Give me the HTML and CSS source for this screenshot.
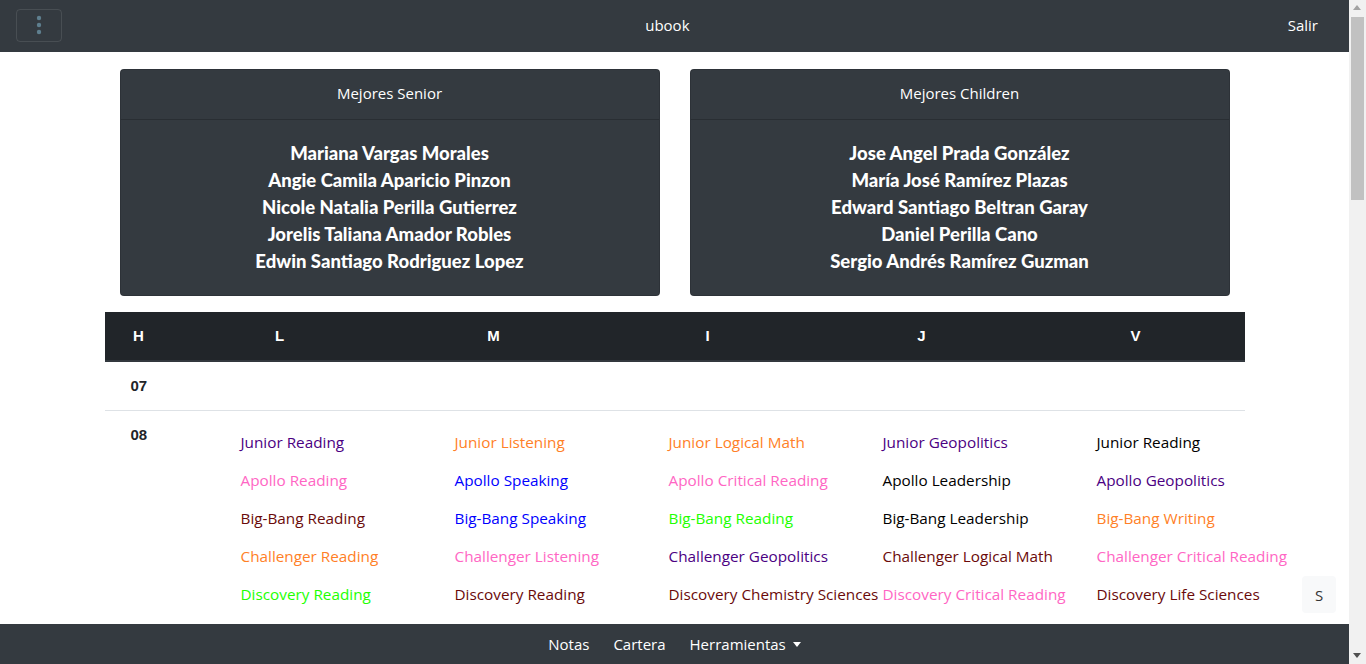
FILE: index.html
```html
<!DOCTYPE html>
<html lang="es">
<head>
<meta charset="utf-8">
<title>ubook</title>
<link rel="stylesheet" href="styles.css">
</head>
<body>
<nav class="topbar">
  <button class="menu-btn" type="button" aria-label="Menú">
    <svg width="6" height="20" viewBox="0 0 6 20"><circle cx="3" cy="3" r="2.2"/><circle cx="3" cy="10" r="2.2"/><circle cx="3" cy="17" r="2.2"/></svg>
  </button>
  <span class="brand">ubook</span>
  <a class="logout" href="#">Salir</a>
</nav>

<main class="page">
  <section class="cards">
    <div class="card">
      <div class="card-head">Mejores Senior</div>
      <div class="card-body">
        <div>Mariana Vargas Morales</div>
        <div>Angie Camila Aparicio Pinzon</div>
        <div>Nicole Natalia Perilla Gutierrez</div>
        <div>Jorelis Taliana Amador Robles</div>
        <div>Edwin Santiago Rodriguez Lopez</div>
      </div>
    </div>
    <div class="card">
      <div class="card-head">Mejores Children</div>
      <div class="card-body">
        <div>Jose Angel Prada González</div>
        <div>María José Ramírez Plazas</div>
        <div>Edward Santiago Beltran Garay</div>
        <div>Daniel Perilla Cano</div>
        <div>Sergio Andrés Ramírez Guzman</div>
      </div>
    </div>
  </section>

  <section class="schedule">
    <div class="sched-head">
      <div class="hcell first"><span>H</span></div>
      <div class="hcell"><span>L</span></div>
      <div class="hcell"><span>M</span></div>
      <div class="hcell"><span>I</span></div>
      <div class="hcell"><span>J</span></div>
      <div class="hcell"><span>V</span></div>
    </div>
    <div class="sched-row">
      <div class="hour">07</div>
    </div>
    <div class="sched-row">
      <div class="hour">08</div>
      <div class="day">
        <a class="c-indigo">Junior Reading</a>
        <a class="c-pink">Apollo Reading</a>
        <a class="c-maroon">Big-Bang Reading</a>
        <a class="c-orange">Challenger Reading</a>
        <a class="c-lime">Discovery Reading</a>
      </div>
      <div class="day">
        <a class="c-orange">Junior Listening</a>
        <a class="c-blue">Apollo Speaking</a>
        <a class="c-blue">Big-Bang Speaking</a>
        <a class="c-pink">Challenger Listening</a>
        <a class="c-maroon">Discovery Reading</a>
      </div>
      <div class="day">
        <a class="c-orange">Junior Logical Math</a>
        <a class="c-pink">Apollo Critical Reading</a>
        <a class="c-lime">Big-Bang Reading</a>
        <a class="c-indigo">Challenger Geopolitics</a>
        <a class="c-maroon">Discovery Chemistry Sciences</a>
      </div>
      <div class="day">
        <a class="c-indigo">Junior Geopolitics</a>
        <a class="c-black">Apollo Leadership</a>
        <a class="c-black">Big-Bang Leadership</a>
        <a class="c-maroon">Challenger Logical Math</a>
        <a class="c-pink">Discovery Critical Reading</a>
      </div>
      <div class="day">
        <a class="c-black">Junior Reading</a>
        <a class="c-indigo">Apollo Geopolitics</a>
        <a class="c-orange">Big-Bang Writing</a>
        <a class="c-pink">Challenger Critical Reading</a>
        <a class="c-maroon">Discovery Life Sciences</a>
      </div>
    </div>
  </section>
</main>

<button class="side-btn" type="button">S</button>

<nav class="bottombar">
  <a href="#">Notas</a>
  <a href="#">Cartera</a>
  <a href="#" class="dropdown">Herramientas</a>
</nav>

<div class="scrollbar" aria-hidden="true">
  <span class="sb-arrow up"></span>
  <span class="sb-thumb"></span>
  <span class="sb-arrow down"></span>
</div>
</body>
</html>
```
FILE: styles.css
```css
* { box-sizing: border-box; }
html, body { margin: 0; padding: 0; }
body {
  font-family: "Open Sans", "Noto Sans", sans-serif;
  font-size: 15px;
  color: #212529;
  background: #fff;
  margin-right: 17px;
  overflow-x: hidden;
}
a { text-decoration: none; color: inherit; }

.topbar {
  position: fixed;
  top: 0; left: 0; right: 17px;
  height: 52px;
  background: #343a40;
  display: flex;
  align-items: center;
  padding: 0 31px 2px 16px;
  z-index: 10;
  color: #fff;
}
.menu-btn {
  width: 46px;
  height: 33px;
  background: transparent;
  border: 1px solid rgba(255,255,255,0.1);
  border-radius: 4px;
  display: flex;
  align-items: center;
  justify-content: center;
  padding: 0;
}
.menu-btn svg { fill: #5f7f8f; }
.brand {
  margin: 0 auto;
  padding-right: 15px;
  font-size: 15px;
}
.logout { font-size: 15px; color: #fff; }

.page {
  width: 1140px;
  margin: 0 auto;
  padding: 69px 15px 0;
  min-height: 2290px;
}

.cards {
  display: grid;
  grid-template-columns: 1fr 1fr;
  gap: 30px;
}
.card {
  background: #343a40;
  border: 1px solid rgba(0,0,0,0.125);
  border-radius: 4px;
  color: #fff;
  overflow: hidden;
}
.card-head {
  height: 50px;
  display: flex;
  align-items: center;
  justify-content: center;
  padding-bottom: 3px;
  border-bottom: 1px solid rgba(0,0,0,0.2);
  font-size: 15px;
}
.card-body {
  padding: 20px;
  text-align: center;
  font-family: Lato, "Open Sans", sans-serif;
  font-weight: 900;
  font-size: 18.5px;
  line-height: 27px;
}

.schedule {
  margin: 16px -15px 0;
}
.sched-head {
  display: grid;
  grid-template-columns: 136px repeat(5, 214px);
  background: #212529;
  color: #fff;
  height: 50px;
  padding-bottom: 1px;
  border-bottom: 2px solid #32383e;
  font-family: "Liberation Sans", Arial, sans-serif;
  font-weight: bold;
  font-size: 15px;
  align-items: center;
  overflow: hidden;
}
.hcell span {
  display: block;
  width: 78px;
  text-align: center;
}
.hcell.first span { width: 68px; }

.sched-row {
  display: grid;
  grid-template-columns: 136px repeat(5, 214px);
  border-bottom: 1px solid #dee2e6;
  min-height: 49px;
}
.sched-row:last-child { border-bottom: none; }
.hour {
  padding: 12px 0 12px 26px;
  line-height: 24px;
  font-family: "Liberation Sans", Arial, sans-serif;
  font-weight: bold;
  font-size: 15px;
}
.day {
  display: flex;
  flex-direction: column;
  padding: 12px 0;
  white-space: nowrap;
}
.day a {
  line-height: 24px;
  margin: 7px 0;
  font-size: 15.3px;
}
.c-indigo { color: #4b0082; }
.c-orange { color: #ff7f27; }
.c-pink { color: #ff66c4; }
.c-blue { color: #0000ff; }
.c-maroon { color: #6a0a0a; }
.c-lime { color: #22ff00; }
.c-black { color: #000; }

.side-btn {
  position: fixed;
  right: 30px;
  bottom: 51px;
  width: 34px;
  height: 37px;
  border: none;
  border-radius: 4px;
  background: #f8f9fa;
  color: #333;
  font-family: "Open Sans", sans-serif;
  font-size: 15px;
  padding: 0;
  z-index: 5;
}

.bottombar {
  position: fixed;
  bottom: 0; left: 0; right: 17px;
  height: 40px;
  background: #343a40;
  display: flex;
  justify-content: center;
  align-items: center;
  gap: 24px;
  z-index: 10;
}
.bottombar a {
  color: #fff;
  font-size: 15px;
}
.dropdown::after {
  content: "";
  display: inline-block;
  margin-left: 7px;
  vertical-align: 3px;
  border-top: 5px solid #fff;
  border-left: 4.5px solid transparent;
  border-right: 4.5px solid transparent;
}

.scrollbar {
  position: fixed;
  top: 0; right: 0; bottom: 0;
  width: 17px;
  background: #f1f1f1;
  z-index: 20;
}
.sb-thumb {
  position: absolute;
  top: 17px;
  left: 2px;
  width: 13px;
  height: 183px;
  background: #c1c1c1;
}
.sb-arrow {
  position: absolute;
  left: 4px;
  width: 0;
  height: 0;
  border-left: 4.5px solid transparent;
  border-right: 4.5px solid transparent;
}
.sb-arrow.up { top: 5px; border-bottom: 5px solid #a3a3a3; }
.sb-arrow.down { bottom: 6px; border-top: 5px solid #505050; }
```
